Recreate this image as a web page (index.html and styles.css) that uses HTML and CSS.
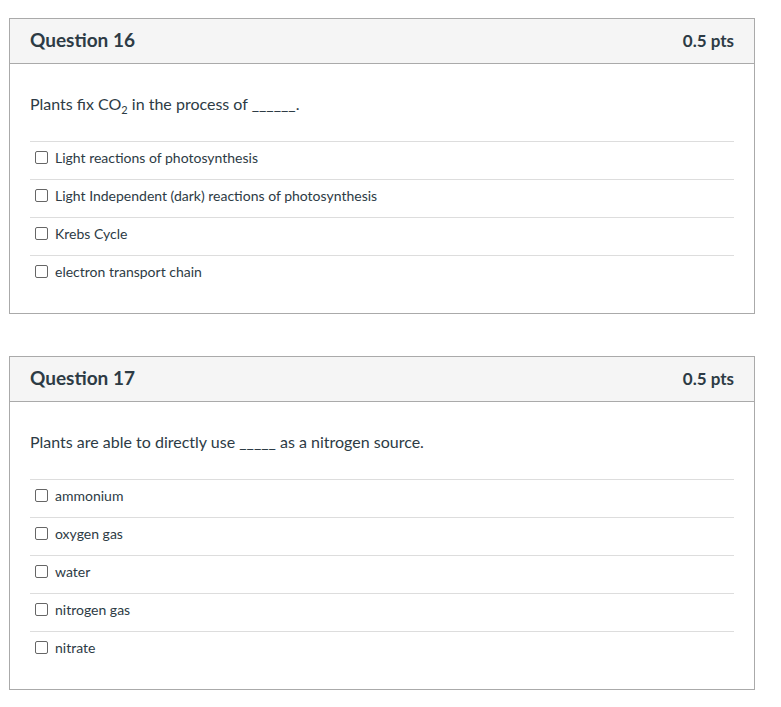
FILE: index.html
```html
<!DOCTYPE html>
<html lang="en">
<head>
  <meta charset="UTF-8" />
  <title>Quiz</title>
  <link rel="stylesheet" href="styles.css">
</head>
<body>
  <div class="quiz">
    <div class="question">
      <div class="question-header">
        <h2>Question 16</h2>
        <span class="points">0.5 pts</span>
      </div>
      <div class="question-body">
        <p class="question-text">Plants fix CO<sub>2</sub> in the process of ______.</p>
        <div class="answers">
          <label class="answer"><span class="box"></span>Light reactions of photosynthesis</label>
          <label class="answer"><span class="box"></span>Light Independent (dark) reactions of photosynthesis</label>
          <label class="answer"><span class="box"></span>Krebs Cycle</label>
          <label class="answer"><span class="box"></span>electron transport chain</label>
        </div>
      </div>
    </div>

    <div class="question">
      <div class="question-header">
        <h2>Question 17</h2>
        <span class="points">0.5 pts</span>
      </div>
      <div class="question-body">
        <p class="question-text">Plants are able to directly use _____ as a nitrogen source.</p>
        <div class="answers">
          <label class="answer"><span class="box"></span>ammonium</label>
          <label class="answer"><span class="box"></span>oxygen gas</label>
          <label class="answer"><span class="box"></span>water</label>
          <label class="answer"><span class="box"></span>nitrogen gas</label>
          <label class="answer"><span class="box"></span>nitrate</label>
        </div>
      </div>
    </div>
  </div>
</body>
</html>
```

FILE: styles.css
```css
* { box-sizing: border-box; margin: 0; padding: 0; }
body {
  font-family: Lato, "Liberation Sans", sans-serif;
  color: #2d3b45;
  background: #fff;
}

.quiz {
  padding: 18px 0 0 9px;
  display: flex;
  flex-direction: column;
  gap: 42px;
}

.question {
  width: 746px;
  border: 1px solid #aaaaaa;
}

.question-header {
  display: flex;
  justify-content: space-between;
  align-items: center;
  height: 45px;
  padding: 0 20px 4px 20px;
  background: #f5f5f5;
  border-bottom: 1px solid #aaaaaa;
}
.question-header h2 {
  font-size: 19px;
  font-weight: bold;
  color: #2d3b45;
}
.points {
  font-size: 17px;
  font-weight: bold;
  color: #2d3b45;
  margin-top: 2px;
}

.question-body {
  padding: 28px 20px 20px 20px;
}
.question-text {
  font-size: 16px;
  line-height: 24px;
  margin-bottom: 25px;
}
.question-text sub {
  font-size: 11px;
  line-height: 0;
}

.answer {
  display: flex;
  align-items: center;
  height: 38px;
  padding: 0 0 6px 5px;
  border-top: 1px solid #dddddd;
  font-size: 14px;
}
.box {
  width: 13px;
  height: 13px;
  border: 1px solid #666;
  border-radius: 2px;
  margin-right: 7px;
  background: #fff;
}
```
